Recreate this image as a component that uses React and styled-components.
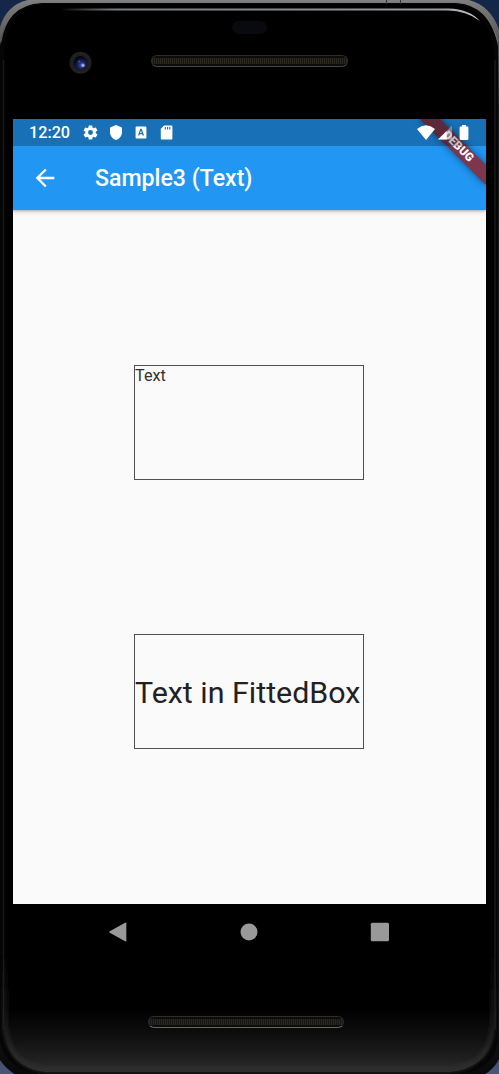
import React from "react";
import styled, { createGlobalStyle } from "styled-components";

const GlobalStyle = createGlobalStyle`
  * { box-sizing: border-box; }
  body { margin: 0; font-family: Roboto, "Liberation Sans", sans-serif; }
`;

const Desktop = styled.div`
  position: relative;
  width: 499px;
  height: 1074px;
  overflow: hidden;
  background: linear-gradient(#142748 0, #142748 80px, #3b4763 1040px, #4a5675 1074px);
`;

const Shell = styled.svg`
  position: absolute;
  inset: 0;
`;

const Device = styled.main`
  position: relative;
  display: flex;
  flex-direction: column;
  height: 100%;
  padding: 0 13px;
`;

const TopBezel = styled.header`
  position: relative;
  height: 119px;
  flex: none;
`;

const Sensor = styled.div`
  width: 35px;
  height: 13px;
  margin: 0 auto;
  position: relative;
  left: -0.5px;
  top: 21px;
  border-radius: 7px;
  background: #090a0f;
`;

const Camera = styled.svg`
  position: absolute;
  left: 55px;
  top: 50px;
`;

const Speaker = styled.div`
  width: ${(p) => p.$width}px;
  height: 12px;
  margin: ${(p) => p.$margin};
  border: 1px solid #2d2d2c;
  border-bottom-color: ${(p) => p.$edge};
  border-radius: 6px;
  background:
    linear-gradient(#0c0c0b 0 2px, transparent 2px 8px, #0c0c0b 8px),
    repeating-linear-gradient(90deg, #2b2922 0 1px, #171612 1px 2px);
`;

const Screen = styled.section`
  position: relative;
  display: flex;
  flex-direction: column;
  height: 785px;
  flex: none;
  overflow: hidden;
  background: #fafafa;
`;

const StatusBar = styled.div`
  position: relative;
  z-index: 3;
  display: flex;
  align-items: center;
  justify-content: space-between;
  height: 27px;
  flex: none;
  padding: 0 17px 0 16px;
  background: rgba(0, 0, 0, 0.25);
  color: #fff;
`;

const StatusGroup = styled.div`
  display: flex;
  align-items: center;
  height: 27px;
`;

const Clock = styled.span`
  width: 53px;
  font-size: 16.2px;
  font-weight: 500;
  line-height: 27px;
`;

const StatusIcon = styled.svg`
  flex: none;
  display: block;
  margin-right: ${(p) => p.$gap || 0}px;
`;

const AppBar = styled.div`
  position: relative;
  z-index: 1;
  display: flex;
  align-items: center;
  height: 91px;
  flex: none;
  margin-top: -27px;
  padding: 27px 18px 0;
  background: #2196f3;
  box-shadow: 0 1px 5px rgba(0, 0, 0, 0.22), 0 1px 2px rgba(0, 0, 0, 0.16);
`;

const BackButton = styled.button`
  display: flex;
  width: 64px;
  padding: 0;
  border: 0;
  background: none;
`;

const Title = styled.h1`
  margin: 2px 0 0;
  color: #fff;
  font-size: 23.1px;
  font-weight: 500;
  line-height: 28px;
  white-space: nowrap;
`;

const Banner = styled.div`
  position: absolute;
  z-index: 2;
  top: 20.7px;
  right: -18.4px;
  width: 92px;
  height: 13.8px;
  transform: rotate(45deg);
  background: rgba(158, 20, 20, 0.74);
  box-shadow: 0 0 7px rgba(0, 0, 0, 0.5);
  color: #fff;
  font-size: 11.7px;
  font-weight: 900;
  line-height: 13.8px;
  text-align: center;
`;

const Body = styled.div`
  display: flex;
  flex: 1;
  flex-direction: column;
  align-items: center;
  justify-content: space-evenly;
  padding-right: 1px;
`;

const TextBox = styled.div`
  display: flex;
  align-items: ${(p) => (p.$fitted ? "center" : "flex-start")};
  width: 230px;
  height: 115px;
  padding-top: ${(p) => (p.$fitted ? 2 : 0)}px;
  border: 1.15px solid #505050;
  color: ${(p) => (p.$fitted ? "#212121" : "#303030")};
  font-size: ${(p) => (p.$fitted ? 30.4 : 16.2)}px;
  line-height: 1.18;
  white-space: nowrap;
`;

const NavBar = styled.nav`
  display: flex;
  justify-content: center;
  align-items: center;
  gap: 111px;
  height: 55px;
  flex: none;
  padding-right: 1px;
`;

const NavIcon = styled.svg`
  display: block;
`;

function DeviceShell() {
  return (
    <Shell width="499" height="1074" viewBox="0 0 499 1074" aria-hidden="true">
      <defs>
        <linearGradient id="rim" x1="0" y1="0" x2="0" y2="1">
          <stop offset="0" stopColor="#80807e" />
          <stop offset=".035" stopColor="#5b5b5b" />
          <stop offset=".1" stopColor="#1d1d1d" />
          <stop offset=".95" stopColor="#111" />
          <stop offset="1" stopColor="#080808" />
        </linearGradient>
        <linearGradient id="chin" x1="0" y1="0" x2="0" y2="1">
          <stop offset="0" stopColor="#000" />
          <stop offset=".94" stopColor="#000" />
          <stop offset=".965" stopColor="#0e0e0e" />
          <stop offset=".988" stopColor="#202020" />
          <stop offset="1" stopColor="#2e2e2e" />
        </linearGradient>
        <linearGradient id="lip" x1="0" y1="950" x2="0" y2="1072" gradientUnits="userSpaceOnUse">
          <stop offset="0" stopColor="#303030" stopOpacity="0" />
          <stop offset=".7" stopColor="#2a2a2a" stopOpacity=".8" />
          <stop offset="1" stopColor="#303030" />
        </linearGradient>
        <linearGradient id="shine" x1="60" y1="0" x2="480" y2="0" gradientUnits="userSpaceOnUse">
          <stop offset="0" stopColor="#899294" stopOpacity="0" />
          <stop offset=".13" stopColor="#747d80" />
          <stop offset=".9" stopColor="#939c9e" />
          <stop offset="1" stopColor="#c1c9c9" />
        </linearGradient>
        <filter id="soft" x="-5%" y="-5%" width="110%" height="110%">
          <feGaussianBlur stdDeviation="2" />
        </filter>
      </defs>
      <path d="M-2 36Q3 3 33 -1H464Q492 3 501 36V1055Q493 1074 472 1080H26Q6 1072-3 1055Z" fill="url(#rim)" />
      <path d="M0 46Q5 5 42 3H456Q490 5 498 46V1042Q493 1070 456 1075H44Q7 1071 0 1042Z" fill="#050505" />
      <path d="M1 42Q7 5 39 2.5H459Q488 5 498 42" fill="none" stroke="#777" strokeWidth=".7" />
      <path d="M4 49Q9 6 45 4H451Q488 7 494 49V1034Q488 1069 448 1072H47Q10 1069 4 1034Z" fill="url(#chin)" />
      <path d="M3.5 60V1030M495 60V1030" fill="none" stroke="#191919" strokeWidth="1.5" />
      <path d="M5 950V1026Q9 1067 47 1070H448Q489 1067 493 1026V950" fill="none" stroke="url(#lip)" strokeWidth="4" filter="url(#soft)" />
      <path d="M60 8.5H449Q469 9 480 21Q466 10.5 448 10.5H60Z" fill="url(#shine)" />
      <path d="M386.5 0V4M400.5 0V4" stroke="#353535" />
    </Shell>
  );
}

export default function App() {
  return (
    <>
      <GlobalStyle />
      <Desktop>
        <DeviceShell />
        <Device>
          <TopBezel>
            <Sensor />
            <Camera width="26" height="26" viewBox="0 0 26 26" aria-hidden="true">
              <defs>
                <radialGradient id="lens" cx=".6" cy=".7" r=".65">
                  <stop offset="0" stopColor="#4e5fc0" />
                  <stop offset=".35" stopColor="#202b72" />
                  <stop offset=".8" stopColor="#080d2b" />
                  <stop offset="1" stopColor="#04050d" />
                </radialGradient>
              </defs>
              <circle cx="12.5" cy="12.8" r="9.5" fill="#1c1c1c" stroke="#212121" strokeWidth="3" />
              <circle cx="12.4" cy="12.5" r="6.5" fill="url(#lens)" />
              <circle cx="15" cy="15.4" r="1.8" fill="#7b8de9" />
              <circle cx="15" cy="15.3" r=".8" fill="#c9d4ff" />
              <circle cx="11.2" cy="11.5" r="1.1" fill="#414daa" />
            </Camera>
            <Speaker $width={197} $margin="42px 0 0 138px" $edge="#444442" />
          </TopBezel>
          <Screen>
            <StatusBar>
              <StatusGroup>
                <Clock>12:20</Clock>
                <StatusIcon width="17" height="17" viewBox="0 0 24 24" $gap={8}>
                  <path fill="#fff" d="M19.43 12.98c.04-.32.07-.64.07-.98s-.03-.66-.07-.98l2.11-1.65c.19-.15.24-.42.12-.64l-2-3.46c-.12-.22-.39-.3-.61-.22l-2.49 1c-.52-.4-1.08-.73-1.69-.98l-.38-2.65A.49.49 0 0 0 14 2h-4c-.25 0-.46.18-.49.42l-.38 2.65c-.61.25-1.17.59-1.69.98l-2.49-1c-.23-.09-.49 0-.61.22l-2 3.46c-.13.22-.07.49.12.64l2.11 1.65c-.04.32-.07.65-.07.98s.03.66.07.98l-2.11 1.65c-.19.15-.24.42-.12.64l2 3.46c.12.22.39.3.61.22l2.49-1c.52.4 1.08.73 1.69.98l.38 2.65c.03.24.24.42.49.42h4c.25 0 .46-.18.49-.42l.38-2.65c.61-.25 1.17-.59 1.69-.98l2.49 1c.23.09.49 0 .61-.22l2-3.46c.12-.22.07-.49-.12-.64zM12 15.5a3.5 3.5 0 1 1 0-7 3.5 3.5 0 0 1 0 7z" />
                </StatusIcon>
                <StatusIcon width="18" height="17" viewBox="0 0 24 24" preserveAspectRatio="none" $gap={10}>
                  <path fill="#fff" d="M12 1.5 20 5v6.5c0 5.1-3.4 9.5-8 11-4.6-1.5-8-5.9-8-11V5z" />
                </StatusIcon>
                <StatusIcon width="12" height="13" viewBox="0 0 12 12" preserveAspectRatio="none" $gap={13}>
                  <path fill="#fff" fillRule="evenodd" d="M1.2.4h9.6l.6.6v10l-.6.6H1.2L.6 11V1zM5.3 2.6 3 8.8h1.3l.4-1.2h2.5l.4 1.2H9L6.7 2.6zM6 4.1l.8 2.4H5.1z" />
                </StatusIcon>
                <StatusIcon width="13" height="15" viewBox="0 0 13 15">
                  <path fill="#fff" fillRule="evenodd" d="M4.2.4h7q1.2 0 1.2 1.2v11.8q0 1.2-1.2 1.2H2q-1.2 0-1.2-1.2V3.8zM4.8 1.9v2.5h1.1V1.9zm2.2 0v2.5h1.1V1.9zm2.2 0v2.5h1.1V1.9z" />
                </StatusIcon>
              </StatusGroup>
              <StatusGroup>
                <StatusIcon width="18" height="15" viewBox="0 0 18 15" $gap={3}>
                  <path fill="#fff" d="M0 4Q9-3.4 18 4L9 15z" />
                </StatusIcon>
                <StatusIcon width="14" height="15" viewBox="0 0 14 15" $gap={7}>
                  <path fill="#fff" fillOpacity=".35" d="M14 .5v14H0z" />
                  <path fill="#fff" d="M8.7 6v8.5H0z" />
                </StatusIcon>
                <StatusIcon width="10" height="15" viewBox="0 0 10 15">
                  <path fill="#fff" d="M3 0h4v1.5h1.2q1.2 0 1.2 1.2v11.1q0 1.1-1.1 1.1H1.7Q.6 14.9.6 13.8V2.7q0-1.2 1.2-1.2H3z" />
                </StatusIcon>
              </StatusGroup>
            </StatusBar>
            <AppBar>
              <BackButton aria-label="Back">
                <StatusIcon width="28" height="28" viewBox="0 0 24 24">
                  <path fill="#fff" d="M20 11H7.83l5.59-5.59L12 4l-8 8 8 8 1.41-1.41L7.83 13H20z" />
                </StatusIcon>
              </BackButton>
              <Title>Sample3 (Text)</Title>
            </AppBar>
            <Banner>DEBUG</Banner>
            <Body>
              <TextBox>Text</TextBox>
              <TextBox $fitted>Text in FittedBox</TextBox>
            </Body>
          </Screen>
          <NavBar>
            <NavIcon width="20" height="20" viewBox="0 0 20 20">
              <path fill="#999" d="M1.8 9.2 17 .8q1.3-.6 1.3.8v16.8q0 1.4-1.3.8L1.8 10.8q-1.3-.8 0-1.6z" />
            </NavIcon>
            <NavIcon width="20" height="20" viewBox="0 0 20 20">
              <circle cx="10" cy="10" r="8.5" fill="#999" />
            </NavIcon>
            <NavIcon width="20" height="20" viewBox="0 0 20 20">
              <rect x=".8" y=".8" width="18.2" height="18.4" rx="1.5" fill="#999" />
            </NavIcon>
          </NavBar>
          <Speaker $width={196} $margin="57px 0 0 135px" $edge="#686562" />
        </Device>
      </Desktop>
    </>
  );
}
